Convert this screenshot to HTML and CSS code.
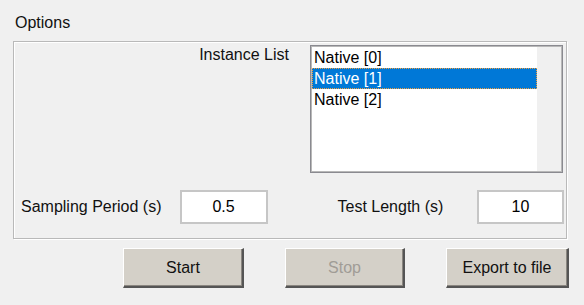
FILE: index.html
```html
<!DOCTYPE html>
<html lang="en">
<head>
  <meta charset="UTF-8" />
  <title>Options</title>
  <link rel="stylesheet" href="styles.css">
</head>
<body>
  <div class="window">
    <div class="group-title">Options</div>
    <div class="group">
      <div class="row-list">
        <span class="label">Instance List</span>
        <div class="listbox">
          <ul class="items">
            <li>Native [0]</li>
            <li class="selected">Native [1]</li>
            <li>Native [2]</li>
          </ul>
          <div class="scroll-track"></div>
        </div>
      </div>
      <div class="row-fields">
        <span class="label label-sampling">Sampling Period (s)</span>
        <input class="field field-sampling" type="text" value="0.5" />
        <span class="label label-length">Test Length (s)</span>
        <input class="field field-length" type="text" value="10" />
      </div>
    </div>
    <div class="buttons">
      <button class="btn btn-start">Start</button>
      <button class="btn btn-stop" disabled>Stop</button>
      <button class="btn btn-export">Export to file</button>
    </div>
  </div>
</body>
</html>
```

FILE: styles.css
```css
body {
  margin: 0;
  background: #f0f0f0;
  font-family: "Liberation Sans", Arial, sans-serif;
  font-size: 16px;
  line-height: 18px;
  color: #111;
}
.window {
  padding: 14px 0 0 13px;
}
.group-title {
  margin-left: 2px;
  height: 18px;
}
.group {
  margin-top: 9px;
  width: 554px;
  height: 198px;
  box-sizing: border-box;
  border: 1px solid #b9b9b9;
  box-shadow: inset 1px 1px 0 #fff, 1px 1px 0 #fff;
  padding: 3px 3px 0 7px;
}
.row-list {
  display: flex;
  justify-content: flex-end;
  align-items: flex-start;
  gap: 21px;
}
.row-list .label {
  margin-top: 1px;
}
.listbox {
  width: 253px;
  height: 128px;
  box-sizing: border-box;
  border: 1px solid #8a8a90;
  box-shadow: inset 0 0 0 1px #b8b8b8;
  background: #fff;
  display: flex;
  padding: 1px;
}
.items {
  list-style: none;
  margin: 0;
  padding: 0;
  flex: 1;
}
.items li {
  height: 21px;
  line-height: 21px;
  padding-left: 2px;
  color: #000;
}
.items li.selected {
  background: #0078d7;
  color: #fff;
  outline: 1px dotted #f0a040;
  outline-offset: -1px;
}
.scroll-track {
  width: 24px;
  background: #f0f0f0;
}
.row-fields {
  display: flex;
  align-items: center;
  margin-top: 17px;
}
.field {
  box-sizing: border-box;
  height: 34px;
  border: 2px solid #c6c6c6;
  background: #fff;
  font-family: inherit;
  font-size: 16px;
  color: #000;
  text-align: center;
  padding: 0;
  outline: none;
}
.field-sampling {
  width: 88px;
  margin-left: 18px;
}
.label-length {
  margin-left: 70px;
}
.field-length {
  width: 87px;
  margin-left: auto;
  margin-right: -1px;
}
.buttons {
  display: flex;
  gap: 41px;
  margin: 9px 0 0 110px;
}
.btn {
  height: 40px;
  box-sizing: border-box;
  background: #d4d0c8;
  border: none;
  border-top: 1px solid #fff;
  border-left: 1px solid #fff;
  border-right: 2px solid #555;
  border-bottom: 2px solid #555;
  box-shadow: inset -1px -1px 0 #8a8680;
  font-family: inherit;
  font-size: 16px;
  color: #111;
  padding: 0;
}
.btn-start {
  width: 121px;
}
.btn-stop {
  width: 120px;
  color: #a09c96;
}
.btn-export {
  width: 123px;
}
```
